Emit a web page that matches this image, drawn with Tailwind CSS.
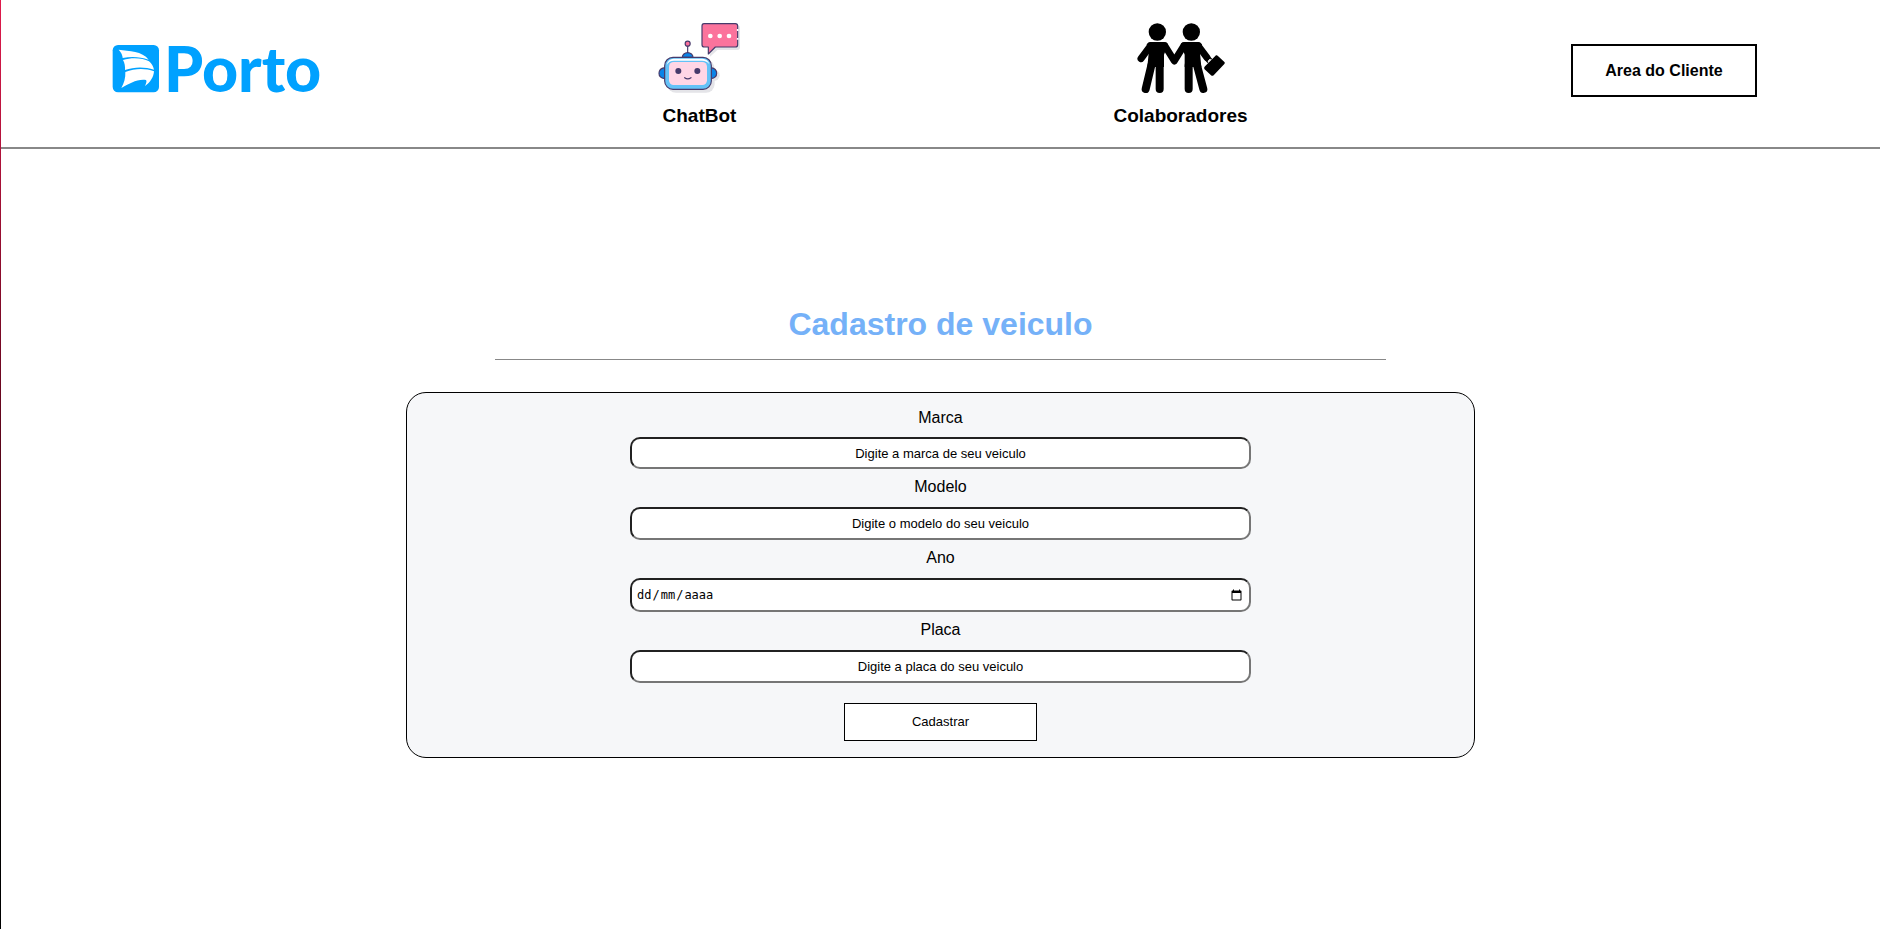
<!DOCTYPE html>
<html lang="pt-BR">
<head>
<meta charset="utf-8">
<meta name="viewport" content="width=device-width, initial-scale=1">
<title>Porto - Cadastro de veiculo</title>
<script src="https://cdn.jsdelivr.net/npm/@tailwindcss/browser@4"></script>
</head>
<body class="flex min-h-screen bg-white font-['Liberation_Sans',Arial,sans-serif] text-black">
<div class="w-px shrink-0 bg-linear-to-b from-[#e01a4c] to-black"></div>
<div class="flex min-w-0 flex-1 flex-col">
  <header class="grid grid-cols-[458fr_481fr_481fr_459fr] items-center border-b-2 border-[#888888] pt-[22px] pb-[19px]">
    <a href="#" aria-label="Porto" class="mb-3 ml-[111px] block justify-self-start">
      <svg class="block h-[50px] w-[212px] overflow-visible" viewBox="36 42 636 150" aria-hidden="true">
        <rect x="38" y="45" width="139" height="142" rx="16" fill="#00a1ff"/>
        <g fill="#fff">
          <path d="M56 59C88 64 126 62 146 89C120 80 94 79 68 84C68 75 63 67 56 59Z"/>
          <path d="M69 90C96 82 128 84 147 94C155 101 160 109 162 119C134 110 103 110 75 120C76 110 74 99 69 90Z"/>
          <path d="M76 126C104 115 136 114 162 124C161 141 151 157 135 168C139 160 141 153 138 150C112 146 88 161 64 174C72 159 77 144 76 126Z"/>
        </g>
        <text x="192" y="187" fill="#00a1ff" font-family="Lato, sans-serif" font-weight="900" font-size="188">Porto</text>
      </svg>
    </a>
    <a href="#" class="flex flex-col items-center gap-2.5 justify-self-center">
      <svg class="h-[72px] w-[84px]" viewBox="54 36 252 216" aria-hidden="true">
        <g fill="#e4e4e8">
          <path d="M192 46h100q8 0 8 8v58q0 8-8 8h-60l-22 20Z"/>
          <rect x="82" y="150" width="142" height="98" rx="26"/>
          <circle cx="222" cy="196" r="17"/>
        </g>
        <g stroke="#463a6b" stroke-width="3.5" stroke-linejoin="round" stroke-linecap="round">
          <path d="M143 106V128" fill="none"/>
          <circle cx="143" cy="101" r="7.5" fill="#fb6f9b"/>
          <path d="M127 142a16 14 0 0 1 32 0Z" fill="#0a84e8"/>
          <path d="M74 173q-17 3-17 17t17 16Z" fill="#0a84e8"/>
          <path d="M213 173q17 3 17 17t-17 16Z" fill="#0a84e8"/>
          <rect x="74" y="142" width="140" height="96" rx="25" fill="#64c2f7"/>
          <path d="M192 41h94q7 0 7 7v56q0 7-7 7h-60l-21 21v-21h-12q-7 0-7-7V48q0-7 6-7Z" fill="#fb739c"/>
        </g>
        <path d="M80 165q3-18 22-19h84q18 1 22 17q-7-11-22-11h-84q-15 0-22 13Z" fill="#fff"/>
        <rect x="87" y="156" width="114" height="69" rx="14" fill="#ffd6e6"/>
        <circle cx="115" cy="183" r="9" fill="#463a6b"/>
        <circle cx="172" cy="183" r="9" fill="#463a6b"/>
        <path d="M134 203q9 7 19 0" fill="none" stroke="#463a6b" stroke-width="3.5" stroke-linecap="round"/>
        <g fill="#fff"><circle cx="211" cy="78" r="7"/><circle cx="239" cy="78" r="7"/><circle cx="267" cy="78" r="7"/></g>
        <path d="M293 57v6M293 84v5" stroke="#fff" stroke-width="5"/>
      </svg>
      <span class="text-[19px] leading-6 font-bold">ChatBot</span>
    </a>
    <a href="#" class="flex flex-col items-center gap-2.5 justify-self-center">
      <svg class="h-[72px] w-[88px]" viewBox="112 36 264 216" aria-hidden="true">
        <circle cx="173" cy="66" r="26"/>
        <circle cx="275" cy="66" r="26"/>
        <path d="M152 96H194Q201 96 205 102L193 134L193 171H143L147 130L141 103Q146 96 152 96Z"/>
        <path d="M254 96H296Q302 96 307 103L301 130L305 171H255L255 134L243 102Q247 96 254 96Z"/>
        <g fill="none" stroke="#000" stroke-linecap="round" stroke-linejoin="round">
          <path d="M152 108L124 146M196 108L224 153L252 108M296 108L322 143" stroke-width="21"/>
          <path d="M155 166L138 237M180 166V237M267 166V237M292 166L311 237" stroke-width="24"/>
        </g>
        <path d="M309 171L340 138" stroke="#fff" stroke-width="3"/>
        <path d="M316 169L349 136Q352 135 354 137L375 157Q376 160 374 162L342 196Q338 199 334 196L314 177Q312 173 316 169Z"/>
        <path d="M325 158l-5-6l10-10l6 6" fill="none" stroke="#000" stroke-width="4"/>
      </svg>
      <span class="text-[19px] leading-6 font-bold">Colaboradores</span>
    </a>
    <button type="button" class="mr-[123px] mb-[9px] h-[53px] w-[186px] justify-self-end border-2 border-black bg-white text-base font-bold">Area do Cliente</button>
  </header>

  <main class="flex flex-col items-center pt-[155px]">
    <h1 class="text-[32px] leading-10 font-bold text-[#75b1f8]">Cadastro de veiculo</h1>
    <hr class="mt-[15px] mb-8 w-[891px] max-w-full border-t border-[#888888]">
    <form class="flex w-[1069px] max-w-full flex-col items-center rounded-[20px] border border-black bg-[#f6f7f9] pt-4 pb-4">
      <label for="marca" class="leading-[18px]">Marca</label>
      <input id="marca" type="text" placeholder="Digite a marca de seu veiculo" class="mt-[10px] mb-[9px] h-8 w-[621px] max-w-full rounded-[10px] border-2 border-t-[#212121] border-r-[#767676] border-b-[#767676] border-l-[#212121] bg-white text-center text-[13px] placeholder:text-black">
      <label for="modelo" class="leading-[18px]">Modelo</label>
      <input id="modelo" type="text" placeholder="Digite o modelo do seu veiculo" class="mt-[11px] mb-[9px] h-[33px] w-[621px] max-w-full rounded-[10px] border-2 border-t-[#212121] border-r-[#767676] border-b-[#767676] border-l-[#212121] bg-white text-center text-[13px] placeholder:text-black">
      <label for="ano" class="leading-[18px]">Ano</label>
      <div class="relative mt-[11px] mb-[9px] w-[621px] max-w-full">
        <input id="ano" type="date" required class="peer block h-[34px] w-full rounded-[10px] border-2 border-t-[#212121] border-r-[#767676] border-b-[#767676] border-l-[#212121] bg-white px-1 font-['DejaVu_Sans_Mono',monospace] text-[13px] invalid:text-transparent">
        <span aria-hidden="true" class="pointer-events-none absolute inset-y-0 left-[7px] hidden items-center gap-px font-['DejaVu_Sans_Mono',monospace] text-[12px] peer-invalid:flex"><span>dd</span><span>/</span><span>mm</span><span>/</span><span>aaaa</span></span>
      </div>
      <label for="placa" class="leading-[18px]">Placa</label>
      <input id="placa" type="text" placeholder="Digite a placa do seu veiculo" class="mt-[11px] h-[33px] w-[621px] max-w-full rounded-[10px] border-2 border-t-[#212121] border-r-[#767676] border-b-[#767676] border-l-[#212121] bg-white text-center text-[13px] placeholder:text-black">
      <button type="submit" class="mt-5 h-[38px] w-[193px] border border-black bg-white text-[13px]">Cadastrar</button>
    </form>
  </main>
</div>
</body>
</html>
